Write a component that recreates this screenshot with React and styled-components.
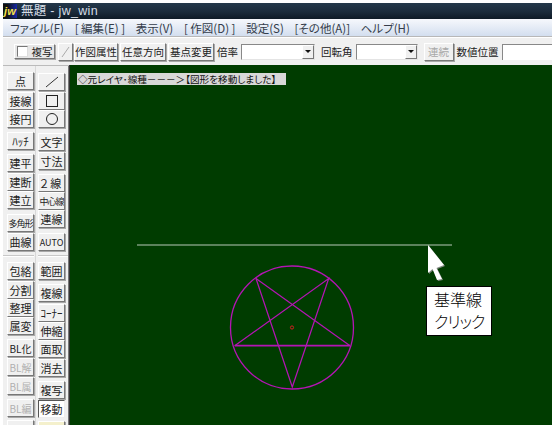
import React from 'react';
import styled, { createGlobalStyle } from 'styled-components';

const GlobalStyle = createGlobalStyle`
  html, body {
    margin: 0;
    background: #fff;
  }
  body {
    font-family: "Noto Sans CJK JP", "Liberation Sans", sans-serif;
    font-feature-settings: "palt";
    overflow: hidden;
  }
`;

const Page = styled.div`
  width: 556px;
  height: 428px;
  padding: 3px 4px 3px 3px;
  box-sizing: border-box;
`;

const Win = styled.div`
  height: 100%;
  display: flex;
  flex-direction: column;
  overflow: hidden;
  background: #f0f0f0;
`;

const TitleBar = styled.div`
  height: 16px;
  flex: none;
  display: flex;
  align-items: center;
  gap: 4px;
  background: linear-gradient(to bottom, #24384a, #1b2b3b 55%, #0e1a26);
  color: #d6dde6;
  font-family: "Liberation Sans", "Noto Sans CJK JP", sans-serif;
  font-size: 12.5px;
  line-height: 16px;
  letter-spacing: 0.3px;
`;

const AppIcon = styled.span`
  width: 14px;
  height: 14px;
  display: flex;
  align-items: center;
  justify-content: center;
  background: linear-gradient(to right, #111 30%, #1428a8);
  color: #f4e04a;
  font-size: 11px;
  font-weight: 700;
  font-style: italic;
`;

const MenuBar = styled.div`
  height: 17px;
  flex: none;
  display: flex;
  align-items: center;
  gap: 10.7px;
  padding-left: 7px;
  background: linear-gradient(to bottom, #f6f8fc, #d3deef);
  border-bottom: 1px solid #b8b8b8;
  color: #333c4a;
  font-size: 11.5px;
`;

const ToolBar = styled.div`
  height: 28px;
  flex: none;
  display: flex;
  align-items: center;
  padding-left: 11px;
  background: #f0f0f0;
  border-top: 1px solid #fff;
  box-sizing: border-box;
  font-size: 10.5px;
  color: #222;
`;

const Raised = styled.div`
  box-sizing: border-box;
  display: flex;
  align-items: center;
  justify-content: center;
  white-space: nowrap;
  background: #f0f0f0;
  border: 1px solid;
  border-color: #fff #777 #777 #fff;
  box-shadow: 1px 1px 0 #a8a8a8;
`;

const ToolButton = styled(Raised)`
  width: ${(p) => p.$w}px;
  height: 18px;
  margin: 0 ${(p) => p.$mr ?? 2}px 0 ${(p) => p.$ml ?? 0}px;
  color: ${(p) => (p.$disabled ? '#a8a8a8' : '#222')};
`;

const CheckBtn = styled(Raised)`
  width: 41px;
  height: 15px;
  margin-right: 3px;
  gap: 4px;
  background: #e6e6e6;
`;

const CheckBox = styled.span`
  width: 9px;
  height: 9px;
  background: #fff;
  border: 1px solid;
  border-color: #777 #ddd #ddd #777;
`;

const ToolLabel = styled.span`
  margin: ${(p) => p.$m};
  white-space: nowrap;
`;

const Select = styled.div`
  width: ${(p) => p.$w}px;
  height: 16px;
  box-sizing: border-box;
  display: flex;
  justify-content: flex-end;
  background: #fff;
  border: 1px solid;
  border-color: #888 #e4e4e4 #e4e4e4 #888;
`;

const Arrow = styled.span`
  width: 12px;
  display: flex;
  align-items: center;
  justify-content: center;
  background: #f0f0f0;
  border: 1px solid;
  border-color: #fff #777 #777 #fff;
  box-sizing: border-box;

  &::after {
    content: '';
    border-style: solid;
    border-width: 3px 3px 0;
    border-color: #111 transparent transparent;
  }
`;

const Input = styled.div`
  flex: 1;
  height: 16px;
  box-sizing: border-box;
  background: #fff;
  border-left: 1px solid #888;
  border-top: 1px solid #888;
`;

const Main = styled.div`
  flex: 1;
  display: flex;
  min-height: 0;
`;

const Side = styled.div`
  width: 66px;
  flex: none;
  display: grid;
  grid-template-columns: 33px 33px;
  overflow: hidden;
  background: #f0f0f0;
  border-top: 1px solid #bbb;
  box-sizing: border-box;
`;

const Column = styled.div`
  display: flex;
  flex-direction: column;
  align-items: ${(p) => (p.$right ? 'flex-start' : 'flex-end')};
  padding: ${(p) => (p.$right ? '0 0 0 2px' : '0 1px 0 0')};
  box-sizing: border-box;
  border-right: 1px solid ${(p) => (p.$right ? '#777' : '#d8d8d8')};
  color: #222;
`;

const SideButton = styled(Raised)`
  flex: none;
  width: 27px;
  height: 18px;
  margin-top: ${(p) => p.$gap}px;
  letter-spacing: ${(p) => p.$track || 0}px;
  color: ${(p) => (p.$disabled ? '#b0b0b0' : '#222')};
  background: ${(p) => (p.$active ? '#fff' : p.$tint ? '#f4f0cc' : '#f0f0f0')};
  border-color: ${(p) => (p.$active ? '#555 #eee #eee #555' : '#fff #777 #777 #fff')};
  box-shadow: ${(p) => (p.$active ? 'none' : '1px 1px 0 #a8a8a8')};
  font-size: ${(p) => p.$size || 11}px;
  overflow: hidden;
`;

const Canvas = styled.div`
  flex: 1;
  position: relative;
  background: #003c00;
  border-left: 1px solid #333;
  overflow: hidden;
`;

const Drawing = styled.svg`
  position: absolute;
  left: -1px;
  top: 0;
  width: 483px;
  height: 360px;
`;

const Status = styled.div`
  position: absolute;
  left: 7px;
  top: 8px;
  height: 12px;
  width: 209px;
  display: flex;
  align-items: center;
  white-space: nowrap;
  overflow: hidden;
  background: #d8d8d8;
  color: #111;
  font-size: 9.6px;
  padding-left: 1px;
  box-sizing: border-box;
`;

const Callout = styled.div`
  position: absolute;
  left: 356px;
  top: 221px;
  width: 66px;
  height: 50px;
  box-sizing: border-box;
  padding: 1px 0 0 7px;
  background: #fff;
  border: 1px solid #000;
  color: #000;
  font-size: 16px;
  line-height: 22px;
  font-weight: 300;
`;

const CalloutTail = styled.span`
  letter-spacing: -1px;
`;

const menus = ['ファイル(F)', '[ 編集(E) ]', '表示(V)', '[ 作図(D) ]', '設定(S)', '[その他(A)]', 'ヘルプ(H)'];

const leftTools = [
  { label: '点', gap: 6 },
  { label: '接線', gap: 2 },
  { label: '接円', gap: 0 },
  { label: 'ﾊｯﾁ', gap: 4 },
  { label: '建平', gap: 4 },
  { label: '建断', gap: 1 },
  { label: '建立', gap: 0 },
  { label: '多角形', gap: 5, size: 9, track: -1 },
  { label: '曲線', gap: 1 },
  { rule: true, gap: 4 },
  { label: '包絡', gap: 5 },
  { label: '分割', gap: 1 },
  { label: '整理', gap: 0 },
  { label: '属変', gap: 0 },
  { label: 'BL化', gap: 4, size: 10 },
  { label: 'BL解', gap: 1, size: 10, disabled: true },
  { label: 'BL属', gap: 1, size: 10, disabled: true },
  { label: 'BL編', gap: 4, size: 10, disabled: true },
  { label: '', gap: 3 },
];

const Line = () => (
  <svg width="16" height="14" viewBox="0 0 16 14">
    <path d="M2 12 L14 2" stroke="#333" fill="none" />
  </svg>
);
const Rect = () => (
  <svg width="16" height="14" viewBox="0 0 16 14">
    <rect x="2.5" y="1.5" width="11" height="11" stroke="#222" fill="none" />
  </svg>
);
const Circle = () => (
  <svg width="16" height="14" viewBox="0 0 16 14">
    <circle cx="8" cy="7" r="5.5" stroke="#222" fill="none" />
  </svg>
);

const rightTools = [
  { icon: <Line />, gap: 7 },
  { icon: <Rect />, gap: 1 },
  { icon: <Circle />, gap: 0 },
  { label: '文字', gap: 5 },
  { label: '寸法', gap: 1 },
  { label: '２線', gap: 4, track: 2 },
  { label: '中心線', gap: 0, size: 9, track: -1 },
  { label: '連線', gap: 0 },
  { label: 'AUTO', gap: 5, size: 9 },
  { rule: true, gap: 4 },
  { label: '範囲', gap: 5 },
  { label: '複線', gap: 4 },
  { label: 'ｺｰﾅｰ', gap: 2 },
  { label: '伸縮', gap: 0 },
  { label: '面取', gap: 0 },
  { label: '消去', gap: 1 },
  { label: '複写', gap: 4 },
  { label: '移動', gap: 1, active: true },
  { label: '', gap: 3, tint: true },
];

const Rule = styled.div`
  flex: none;
  align-self: stretch;
  height: 1px;
  margin: ${(p) => p.$gap}px 0 0;
  background: #fff;
  border-top: 1px solid #c8c8c8;
`;

const renderTools = (tools) =>
  tools.map((t, i) =>
    t.rule ? (
      <Rule key={i} $gap={t.gap} />
    ) : (
      <SideButton
        key={i}
        $gap={t.gap}
        $track={t.track}
        $size={t.size}
        $disabled={t.disabled}
        $active={t.active}
        $tint={t.tint}
      >
        {t.icon || t.label}
      </SideButton>
    )
  );

export default function App() {
  return (
    <Page>
      <GlobalStyle />
      <Win>
        <TitleBar>
          <AppIcon>jw</AppIcon>
          <span>無題 - jw_win</span>
        </TitleBar>
        <MenuBar>
          {menus.map((m) => (
            <span key={m}>{m}</span>
          ))}
        </MenuBar>
        <ToolBar>
          <CheckBtn>
            <CheckBox />
            複写
          </CheckBtn>
          <ToolButton $w={15} $mr={1} $disabled>
            <svg width="9" height="12" viewBox="0 0 9 12">
              <path d="M1 11 L8 1" stroke="#aaa" fill="none" />
            </svg>
          </ToolButton>
          <ToolButton $w={44}>作図属性</ToolButton>
          <ToolButton $w={46}>任意方向</ToolButton>
          <ToolButton $w={46}>基点変更</ToolButton>
          <ToolLabel $m="0 3px 0 1px">倍率</ToolLabel>
          <Select $w={74}>
            <Arrow />
          </Select>
          <ToolLabel $m="0 3px 0 6px">回転角</ToolLabel>
          <Select $w={62}>
            <Arrow />
          </Select>
          <ToolButton $w={30} $mr={3} $ml={6} $disabled>
            連続
          </ToolButton>
          <ToolLabel $m="0 3px 0 0">数値位置</ToolLabel>
          <Input />
        </ToolBar>
        <Main>
          <Side>
            <Column>{renderTools(leftTools)}</Column>
            <Column $right>{renderTools(rightTools)}</Column>
          </Side>
          <Canvas>
            <Drawing viewBox="69 65 483 360">
              <line x1="137" y1="245" x2="452" y2="245" stroke="#b8c8b8" strokeWidth="1.2" />
              <circle cx="292" cy="327.5" r="61.5" fill="none" stroke="#b414b4" strokeWidth="1.3" />
              <g stroke="#b414b4" strokeWidth="1.2" fill="none">
                <path d="M256 278.5 L292.3 387 L328.7 278.5 L234.7 345.7" />
                <path d="M256 278.5 L350 345.7" />
                <path d="M234.7 345.7 L350 345.7" strokeWidth="1.8" />
              </g>
              <circle cx="292" cy="327.5" r="1.6" fill="none" stroke="#d02020" />
              <path
                d="M429 246 L445 266 L437.5 269 L443 280 L438 281 L433.5 270 L429 274 Z"
                fill="#808880"
              />
              <path
                d="M428 245 L444 265 L436.5 268 L442 279 L437 280 L432.5 269 L428 273 Z"
                fill="#fff"
              />
            </Drawing>
            <Status>◇元レイヤ･線種－－－＞【図形を移動しました】</Status>
            <Callout>
              基準線
              <br />
              <CalloutTail>クリック</CalloutTail>
            </Callout>
          </Canvas>
        </Main>
      </Win>
    </Page>
  );
}
